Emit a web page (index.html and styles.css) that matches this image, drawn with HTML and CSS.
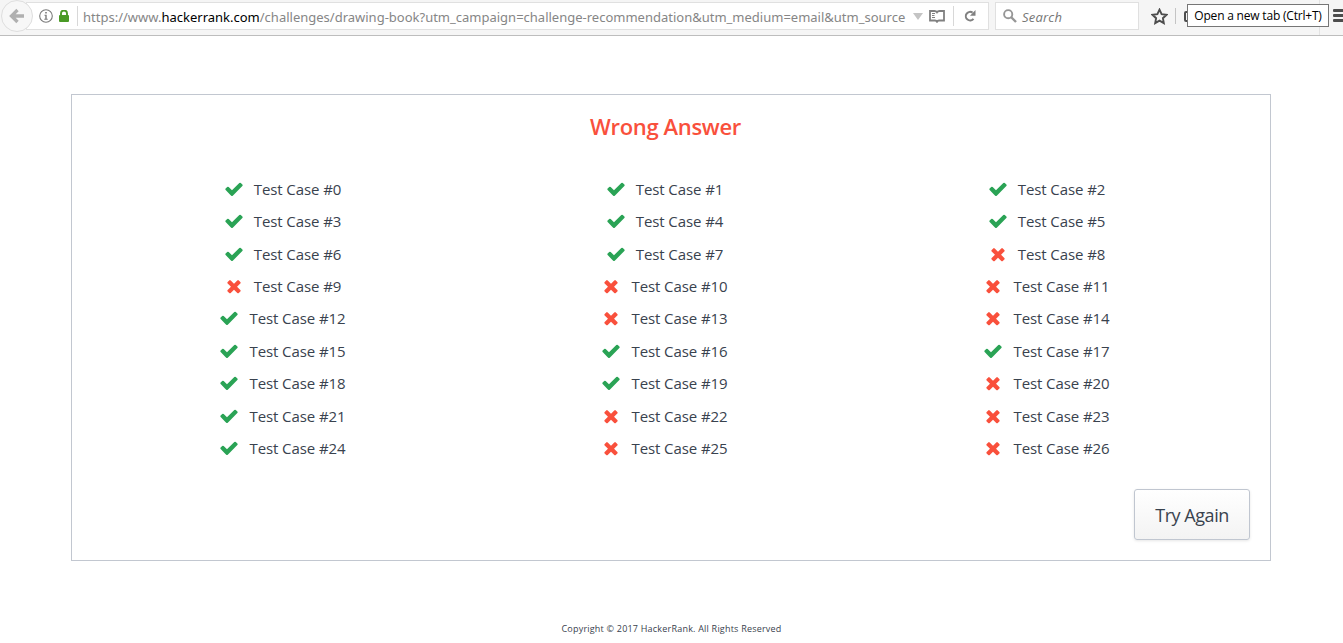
FILE: index.html
```
<!DOCTYPE html>
<html lang="en">
<head>
<meta charset="utf-8">
<title>HackerRank</title>
<link rel="stylesheet" href="styles.css">
</head>
<body>
<svg class="defs" width="0" height="0">
  <symbol id="pass" viewBox="0 0 1792 1792"><path d="M1671 566q0 40-28 68l-724 724-136 136q-28 28-68 28t-68-28l-136-136-362-362q-28-28-28-68t28-68l136-136q28-28 68-28t68 28l294 295 656-657q28-28 68-28t68 28l136 136q28 28 28 68z"/></symbol>
  <symbol id="fail" viewBox="0 0 1792 1792"><path d="M1490 1322q0 40-28 68l-136 136q-28 28-68 28t-68-28l-294-294-294 294q-28 28-68 28t-68-28l-136-136q-28-28-28-68t28-68l294-294-294-294q-28-28-28-68t28-68l136-136q28-28 68-28t68 28l294 294 294-294q28-28 68-28t68 28l136 136q28 28 28 68t-28 68l-294 294 294 294q28 28 28 68z"/></symbol>
</svg>
<header class="toolbar">
  <div class="back"><svg width="16" height="16" viewBox="0 0 16 16"><path d="M8.500 2L2.500 8l6 6M3 8h12" fill="none" stroke="#b0b0b0" stroke-width="3.300"/></svg></div>
  <div class="address">
    <svg class="info" width="14" height="14" viewBox="0 0 14 14"><circle cx="7" cy="7" r="6.300" fill="none" stroke="#7a7a7a" stroke-width="1.100"/><path d="M6.200 3h1.600v1.600H6.200zM5.500 5.800h2.200v4h1v1H5.300v-1h1v-3h-.8z" fill="#7a7a7a"/></svg>
    <svg class="lock" width="10" height="12" viewBox="0 0 10 12"><path d="M2 6V3.500a3 3 0 0 1 6 0V6" fill="none" stroke="#4a9a26" stroke-width="1.900"/><rect y="5" width="10" height="7" rx="1" fill="#4a9a26"/></svg>
    <span class="rule"></span>
    <span class="url">https://www.<b>hackerrank.com</b>/challenges/drawing-book?utm_campaign=challenge-recommendation&amp;utm_medium=email&amp;utm_source</span>
    <svg class="drop" width="10" height="7" viewBox="0 0 10 7"><path d="M0 0h10L5 7z" fill="#c4c4c4"/></svg>
    <svg class="reader" width="16" height="13" viewBox="0 0 16 13"><path d="M1 1h4.500Q7.300 1 8 2.200Q8.700 1 10.500 1H15v9.500h-5q-1.500 0-2 1.200q-.5-1.200-2-1.200H1z" fill="none" stroke="#808080" stroke-width="1.800"/><path d="M3 3.500h3M3 5.500h2.500M3 7.500h3" stroke="#808080"/></svg>
    <span class="rule"></span>
    <svg class="reload" width="12" height="12" viewBox="0 0 12 12"><path d="M9.500 8.800A4.300 4.300 0 1 1 8.600 2.600" fill="none" stroke="#808080" stroke-width="2"/><path d="M11.500 0v5.800H6z" fill="#808080"/></svg>
  </div>
  <div class="search">
    <svg width="14" height="14" viewBox="0 0 14 14"><circle cx="5.200" cy="5.200" r="4.100" fill="none" stroke="#969696" stroke-width="1.900"/><path d="M8 8l5 5" stroke="#969696" stroke-width="2.400"/></svg>
    <span>Search</span>
  </div>
  <svg class="star" width="17" height="17" viewBox="0 0 17 17"><path d="M8.500 1.700l2.100 4.500 4.900.6-3.600 3.400.9 4.900-4.300-2.400-4.300 2.400.9-4.900L1.500 6.800l4.900-.6z" fill="none" stroke="#4d4d4d" stroke-width="1.900"/></svg>
  <span class="rule"></span>
  <span class="clip"></span>
  <div class="menu"><i></i><i></i><i></i></div>
  <span class="menu-rule"></span>
  <div class="tooltip">Open a new tab (Ctrl+T)</div>
</header>
<main class="panel">
  <h1 class="verdict">Wrong Answer</h1>
  <div class="cases" id="cases"></div>
  <button class="retry">Try Again</button>
</main>
<footer class="copyright"><span>Copyright © 2017 HackerRank. All Rights Reserved</span></footer>
<script src="cases.js"></script>
</body>
</html>
```
FILE: cases.js
```
const failed = new Set([8, 9, 10, 11, 13, 14, 20, 22, 23, 25, 26]);
const cases = document.getElementById('cases');
for (let n = 0; n < 27; n++) {
  const state = failed.has(n) ? 'fail' : 'pass';
  cases.insertAdjacentHTML('beforeend',
    `<div class="case"><svg class="mark ${state}"><use href="#${state}"/></svg><span class="name">Test Case #${n}</span></div>`);
}
```
FILE: styles.css
```
* { box-sizing: border-box; }
body { margin: 0; height: 643px; overflow: hidden; background: #fff; font-family: "Open Sans", "Noto Sans", sans-serif; color: #39424e; }
.defs { position: absolute; }
svg { flex: none; }

.toolbar { position: relative; display: flex; align-items: flex-start; height: 36px; background: #f5f5f5; border-bottom: 1px solid #bdbdbd; }
.back { position: relative; z-index: 1; width: 32px; height: 32px; margin-left: 1px; border: 1px solid #dedede; border-radius: 50%; background: #f7f7f7; display: flex; align-items: center; justify-content: center; flex: none; }
.address { display: flex; align-items: center; width: 963px; height: 28px; margin: 2px 0 0 -7px; padding-left: 12px; border: 1px solid #e0e0e0; background: #fff; flex: none; }
.rule { width: 1px; height: 20px; background: #d8d8d8; flex: none; }
.lock { margin: 0 8px 0 6px; }
.url { width: 823px; margin-left: 5px; font-family: "Noto Sans", sans-serif; font-size: 13px; line-height: 20px; white-space: nowrap; color: #868686; padding-top: 2px; }
.url b { font-weight: 400; color: #000; }
.drop { margin-left: 7px; }
.reader { margin: 0 8px 0 6px; }
.reload { margin-left: 10px; }
.search { display: flex; align-items: center; width: 144px; height: 28px; margin: 2px 0 0 6px; padding-left: 7px; border: 1px solid #e0e0e0; background: #fff; font: italic 13px "Open Sans", sans-serif; letter-spacing: .2px; color: #767676; flex: none; }
.search span { margin-left: 5px; padding-top: 2px; }
.star { margin: 8px 7px 0 12px; }
.toolbar > .rule { margin-top: 8px; height: 16px; background: #c4c4c4; }
.clip { width: 10px; height: 11px; margin: 11px 0 0 8px; border: 2px solid #4d4d4d; border-radius: 2px; }
.menu { display: flex; flex-direction: column; gap: 2px; width: 12px; margin: 9px -2px 0 auto; }
.menu i { height: 3px; background: #4d4d4d; border-radius: 1px; }
.menu-rule { position: absolute; left: 1319px; top: 0; width: 1px; height: 35px; background: #e3e3e3; }
.tooltip { position: absolute; left: 1187px; top: 4px; width: 142px; height: 23px; border: 1px solid #767676; background: #fff; color: #000; font-size: 12px; line-height: 22px; text-align: center; white-space: nowrap; letter-spacing: -.2px; }

.panel { display: flex; flex-direction: column; width: 1200px; height: 467px; margin: 58px 0 0 71px; padding: 16px 20px 20px; border: 1px solid #c2c7d0; }
.verdict { width: 1147px; margin: 0; font-size: 22px; line-height: 30px; font-weight: 600; letter-spacing: -.33px; color: #f9503c; text-align: center; }
.cases { display: grid; grid-template-columns: repeat(3, 382px); grid-auto-rows: 32.4px; margin-top: 31.6px; }
.case { display: flex; align-items: center; justify-content: center; gap: 10px; }
.mark { width: 20px; height: 20px; margin-left: -1px; }
.pass { fill: #2aa355; }
.fail { fill: #f9503c; }
.name { font-size: 15px; line-height: 20px; letter-spacing: -.09px; white-space: nowrap; }
.retry { align-self: flex-end; width: 116px; height: 51px; margin-top: auto; padding: 0; border: 1px solid #c0c6d0; border-radius: 3px; background: linear-gradient(#fff, #f3f3f3); box-shadow: 0 1px 3px rgba(0, 0, 0, .1); font: 18px "Open Sans", sans-serif; letter-spacing: -.45px; color: #39424e; }
.copyright { margin-top: 61px; font-size: 9px; line-height: 13px; letter-spacing: .21px; text-align: center; }
```
